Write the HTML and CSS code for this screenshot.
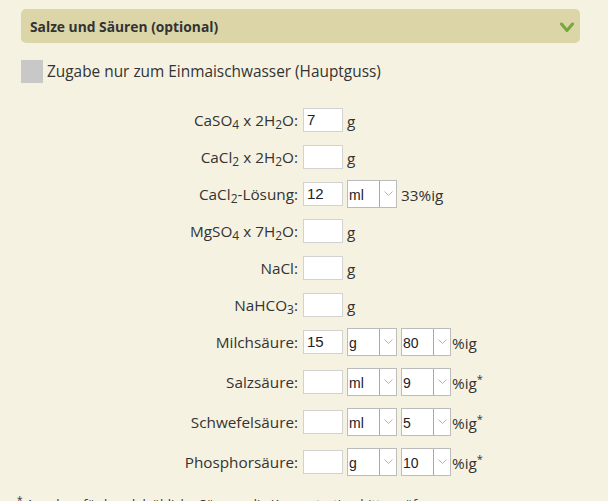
FILE: index.html
```html
<!DOCTYPE html>
<html lang="de">
<head>
    <meta charset="UTF-8">
    <meta name="viewport" content="width=device-width, initial-scale=1.0">
    <title>Salze und Säuren</title>
    <link rel="stylesheet" href="styles.css">
</head>
<body>
    <div class="panel">
        <header class="panel-head">
            <h2>Salze und Säuren (optional)</h2>
            <svg class="toggle" width="14" height="11" viewBox="0 0 14 11">
                <polyline points="1.5,2 7,8.5 12.5,2" fill="none" stroke="#77a83c" stroke-width="3" stroke-linecap="round" stroke-linejoin="round"/>
            </svg>
        </header>

        <label class="check">
            <span class="box"></span>
            Zugabe nur zum Einmaischwasser (Hauptguss)
        </label>

        <div class="salts">
            <div class="row">
                <span class="name">CaSO<sub>4</sub> x 2H<sub>2</sub>O:</span>
                <input type="text" value="7">
                <span class="unit">g</span>
            </div>
            <div class="row">
                <span class="name">CaCl<sub>2</sub> x 2H<sub>2</sub>O:</span>
                <input type="text">
                <span class="unit">g</span>
            </div>
            <div class="row">
                <span class="name">CaCl<sub>2</sub>-Lösung:</span>
                <input type="text" value="12">
                <div class="combo"><select><option>ml</option></select><span class="arrow"><svg width="9" height="6" viewBox="0 0 9 6"><polyline points="0.5,0.5 4.5,4.5 8.5,0.5" fill="none" stroke="#b4b4b4"/></svg></span></div>
                <span class="unit">33%ig</span>
            </div>
            <div class="row">
                <span class="name">MgSO<sub>4</sub> x 7H<sub>2</sub>O:</span>
                <input type="text">
                <span class="unit">g</span>
            </div>
            <div class="row">
                <span class="name">NaCl:</span>
                <input type="text">
                <span class="unit">g</span>
            </div>
            <div class="row">
                <span class="name">NaHCO<sub>3</sub>:</span>
                <input type="text">
                <span class="unit">g</span>
            </div>
            <div class="row">
                <span class="name">Milchsäure:</span>
                <input type="text" value="15">
                <div class="combo"><select><option>g</option></select><span class="arrow"><svg width="9" height="6" viewBox="0 0 9 6"><polyline points="0.5,0.5 4.5,4.5 8.5,0.5" fill="none" stroke="#b4b4b4"/></svg></span></div>
                <div class="combo"><select><option>80</option></select><span class="arrow"><svg width="9" height="6" viewBox="0 0 9 6"><polyline points="0.5,0.5 4.5,4.5 8.5,0.5" fill="none" stroke="#b4b4b4"/></svg></span></div>
                <span class="pct">%ig</span>
            </div>
            <div class="row sup">
                <span class="name">Salzsäure:</span>
                <input type="text">
                <div class="combo"><select><option>ml</option></select><span class="arrow"><svg width="9" height="6" viewBox="0 0 9 6"><polyline points="0.5,0.5 4.5,4.5 8.5,0.5" fill="none" stroke="#b4b4b4"/></svg></span></div>
                <div class="combo"><select><option>9</option></select><span class="arrow"><svg width="9" height="6" viewBox="0 0 9 6"><polyline points="0.5,0.5 4.5,4.5 8.5,0.5" fill="none" stroke="#b4b4b4"/></svg></span></div>
                <span class="pct">%ig<sup>*</sup></span>
            </div>
            <div class="row sup">
                <span class="name">Schwefelsäure:</span>
                <input type="text">
                <div class="combo"><select><option>ml</option></select><span class="arrow"><svg width="9" height="6" viewBox="0 0 9 6"><polyline points="0.5,0.5 4.5,4.5 8.5,0.5" fill="none" stroke="#b4b4b4"/></svg></span></div>
                <div class="combo"><select><option>5</option></select><span class="arrow"><svg width="9" height="6" viewBox="0 0 9 6"><polyline points="0.5,0.5 4.5,4.5 8.5,0.5" fill="none" stroke="#b4b4b4"/></svg></span></div>
                <span class="pct">%ig<sup>*</sup></span>
            </div>
            <div class="row sup">
                <span class="name">Phosphorsäure:</span>
                <input type="text">
                <div class="combo"><select><option>g</option></select><span class="arrow"><svg width="9" height="6" viewBox="0 0 9 6"><polyline points="0.5,0.5 4.5,4.5 8.5,0.5" fill="none" stroke="#b4b4b4"/></svg></span></div>
                <div class="combo"><select><option>10</option></select><span class="arrow"><svg width="9" height="6" viewBox="0 0 9 6"><polyline points="0.5,0.5 4.5,4.5 8.5,0.5" fill="none" stroke="#b4b4b4"/></svg></span></div>
                <span class="pct">%ig<sup>*</sup></span>
            </div>
        </div>

        <p class="note"><sup>*</sup> Angaben für handelsübliche Säuren, die Konzentration bitte prüfen.</p>
    </div>
</body>
</html>
```

FILE: styles.css
```css
body {
    margin: 0;
    background-color: #f6f2e2;
    color: #333;
    font-family: "Open Sans", sans-serif;
    overflow: hidden;
}
.panel {
    padding: 9px 28px 0 21px;
}
.panel-head {
    display: flex;
    justify-content: space-between;
    align-items: center;
    height: 34px;
    padding: 0 6px 0 9px;
    background-color: #dcd5a8;
    border-radius: 5px;
}
.panel-head h2 {
    margin: 0;
    font-size: 13.8px;
    font-weight: bold;
    color: #333;
}
.toggle {
    margin-top: 2px;
}

/* Checkbox */
.check {
    display: flex;
    align-items: center;
    gap: 4px;
    margin-top: 17px;
    height: 23px;
    font-size: 15.4px;
}
.check .box {
    width: 22px;
    height: 23px;
    background-color: #c8c8c8;
}

/* Salt rows */
.salts {
    margin-top: 18px;
}
.row {
    display: flex;
    align-items: center;
    gap: 4px;
    height: 37px;
    font-size: 15.3px;
}
.row.sup {
    margin-top: 3px;
}
.row .name {
    width: 277px;
    margin-right: 1px;
    text-align: right;
}
.row sub {
    font-size: 12px;
    line-height: 0;
    vertical-align: -3px;
}
.row sup {
    font-size: 11px;
    line-height: 0;
    vertical-align: 6px;
}
.row input {
    box-sizing: border-box;
    width: 40px;
    height: 24px;
    padding: 0 3px;
    border: 1px solid #d2d2d2;
    background: white;
    font-family: "Liberation Sans", sans-serif;
    font-size: 15px;
    color: #222;
}
.row .unit {
    margin-top: 2px;
}
.row .pct {
    margin-left: -3px;
    margin-top: 2px;
}
.combo {
    display: flex;
    box-sizing: border-box;
    width: 50px;
    height: 28px;
    border: 1px solid #bcbcbc;
    background: white;
}
.combo select {
    -webkit-appearance: none;
    appearance: none;
    flex: 1;
    min-width: 0;
    border: none;
    background: white;
    padding: 3px 0 0 1px;
    font-family: "Liberation Sans", sans-serif;
    font-size: 14px;
    color: #222;
}
.combo .arrow {
    display: flex;
    align-items: center;
    justify-content: center;
    width: 16px;
    border-left: 1px solid #a8a8a8;
}

.note {
    margin: 13px 0 0 -4px;
    font-size: 13px;
}
.note sup {
    font-size: 10px;
}
```
